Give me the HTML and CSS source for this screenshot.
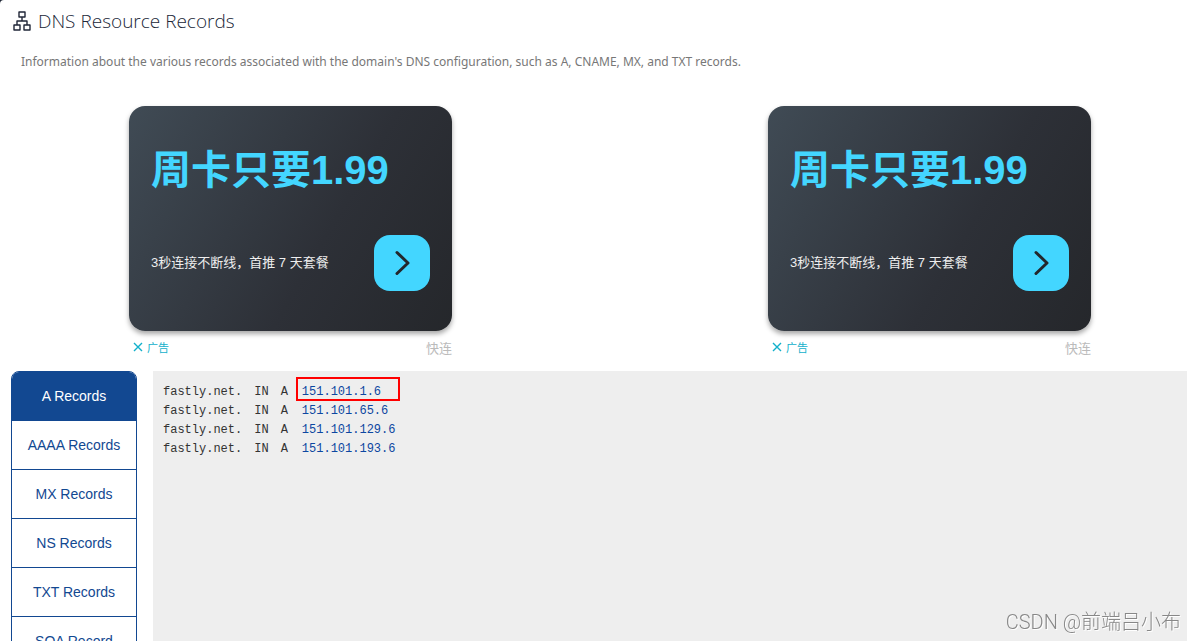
FILE: index.html
```html
<!DOCTYPE html>
<html lang="en">
<head>
<meta charset="UTF-8">
<meta name="viewport" content="width=device-width, initial-scale=1.0">
<title>DNS Resource Records</title>
<link rel="stylesheet" href="styles.css">
</head>
<body>

<main class="page">

<header class="heading">
<svg class="heading-icon" viewBox="0 0 18 20" fill="none" stroke="currentColor" stroke-width="1.4" stroke-linejoin="round" aria-hidden="true">
<rect x="6" y="1" width="6" height="5"/>
<rect x="1" y="14" width="6" height="5"/>
<rect x="11" y="14" width="6" height="5"/>
<path d="M9 6v4M4 14v-4h10v4"/>
</svg>
<h1>DNS Resource Records</h1>
</header>

<p class="intro">Information about the various records associated with the domain's DNS configuration, such as A, CNAME, MX, and TXT records.</p>

<section class="ads">

<article class="ad">
<div class="ad-card">
<h2>周卡只要1.99</h2>
<div class="ad-row">
<p>3秒连接不断线，首推 7 天套餐</p>
<a class="ad-go" href="#" aria-label="快连">
<svg viewBox="0 0 56 56" fill="none" stroke="#23272c" stroke-width="3" stroke-linecap="round" stroke-linejoin="round"><path d="M23 17.500l11 10.500-11 10.500"/></svg>
</a>
</div>
</div>
<div class="ad-foot">
<a class="ad-mark" href="#"><svg viewBox="0 0 10 10" fill="none" stroke="currentColor" stroke-width="1.4"><path d="M1 1l8 8M9 1l-8 8"/></svg>广告</a>
<span>快连</span>
</div>
</article>

<article class="ad">
<div class="ad-card">
<h2>周卡只要1.99</h2>
<div class="ad-row">
<p>3秒连接不断线，首推 7 天套餐</p>
<a class="ad-go" href="#" aria-label="快连">
<svg viewBox="0 0 56 56" fill="none" stroke="#23272c" stroke-width="3" stroke-linecap="round" stroke-linejoin="round"><path d="M23 17.500l11 10.500-11 10.500"/></svg>
</a>
</div>
</div>
<div class="ad-foot">
<a class="ad-mark" href="#"><svg viewBox="0 0 10 10" fill="none" stroke="currentColor" stroke-width="1.4"><path d="M1 1l8 8M9 1l-8 8"/></svg>广告</a>
<span>快连</span>
</div>
</article>

</section>

<section class="records">

<nav class="tabs">
<button class="active">A Records</button>
<button>AAAA Records</button>
<button>MX Records</button>
<button>NS Records</button>
<button>TXT Records</button>
<button>SOA Record</button>
</nav>

<div class="panel">
<table>
<tbody>
<tr><td>fastly.net.</td><td>IN</td><td>A</td><td class="marked"><a href="#">151.101.1.6</a></td></tr>
<tr><td>fastly.net.</td><td>IN</td><td>A</td><td><a href="#">151.101.65.6</a></td></tr>
<tr><td>fastly.net.</td><td>IN</td><td>A</td><td><a href="#">151.101.129.6</a></td></tr>
<tr><td>fastly.net.</td><td>IN</td><td>A</td><td><a href="#">151.101.193.6</a></td></tr>
</tbody>
</table>
</div>

</section>

</main>

<div class="watermark">CSDN @前端吕小布</div>

</body>
</html>
```

FILE: styles.css
```css
*,*::after{
box-sizing:border-box;
}

html{
background:#1d2433;
}

body{
margin:0;
height:100vh;
overflow:hidden;
background:white;
border-top-left-radius:4px;
font-family:"Liberation Sans","Noto Sans CJK SC",sans-serif;
}

h1,h2,p{
margin:0;
}

a{
text-decoration:none;
}

.page{
padding:8px 9px 0 11px;
}

.heading{
display:flex;
align-items:center;
gap:7px;
height:26px;
padding-left:2px;
color:#212738;
}

.heading-icon{
width:18px;
height:20px;
}

.heading h1{
font-family:"Open Sans","Noto Sans",sans-serif;
font-size:19px;
font-weight:300;
line-height:26px;
}

.intro{
margin-top:18px;
padding-left:10px;
font-family:"Noto Sans",sans-serif;
font-size:12px;
line-height:20px;
color:#777;
}

.ads{
display:flex;
justify-content:space-between;
padding:34px 96px 0 118px;
}

.ad{
width:323px;
}

.ad-card{
height:225px;
padding:36px 22px 40px;
display:flex;
flex-direction:column;
justify-content:space-between;
border-radius:16px;
background:linear-gradient(120deg,#404b55,#2d3037 60%,#25272b);
box-shadow:0 3px 5px rgba(0,0,0,.35);
}

.ad-card h2{
font-size:40px;
line-height:56px;
color:#43d6ff;
}

.ad-row{
display:flex;
align-items:center;
justify-content:space-between;
}

.ad-row p{
font-size:13px;
line-height:20px;
color:#eee;
}

.ad-go{
width:56px;
height:56px;
border-radius:16px;
background:#43d6ff;
}

.ad-go svg{
display:block;
}

.ad-foot{
display:flex;
justify-content:space-between;
align-items:center;
height:32px;
padding-left:4px;
font-size:13px;
color:#bbb;
}

.ad-mark{
display:flex;
align-items:center;
gap:4px;
font-size:11px;
color:#12b0cb;
}

.ad-mark svg{
width:10px;
height:10px;
}

.records{
display:flex;
gap:16px;
margin-top:8px;
}

.tabs{
width:126px;
flex-shrink:0;
display:flex;
flex-direction:column;
border:1px solid #124891;
border-radius:8px;
overflow:hidden;
}

.tabs button{
height:49px;
flex-shrink:0;
padding:0;
border:none;
border-bottom:1px solid #124891;
background:white;
color:#124891;
font-family:inherit;
font-size:14px;
cursor:pointer;
}

.tabs .active{
background:#124891;
color:white;
}

.panel{
flex:1;
padding:12px 10px;
background:#eee;
}

table{
border-collapse:collapse;
font-family:"Liberation Mono",monospace;
font-size:12px;
line-height:19px;
color:#333;
}

td{
padding:0 12px 0 0;
}

td:last-child{
padding:0 0 0 2px;
}

td a{
color:#0c47a1;
}

.marked{
position:relative;
}

.marked::after{
content:"";
position:absolute;
top:-6px;
left:-4px;
width:104px;
height:24px;
border:2px solid #f00;
}

.watermark{
position:fixed;
right:15px;
bottom:6px;
font-family:Roboto,"Noto Sans CJK SC",sans-serif;
font-size:20px;
font-weight:300;
line-height:26px;
color:#888;
text-shadow:1px 1px 0 #fff;
}
```
